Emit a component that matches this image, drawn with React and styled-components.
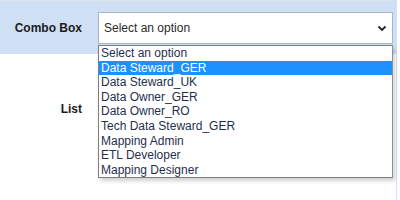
import React from 'react'
import styled, { createGlobalStyle } from 'styled-components'

const GlobalStyle = createGlobalStyle`
  body {
    margin: 0;
    background: #ffffff;
    font-family: "Liberation Sans", Arial, sans-serif;
  }
`

const options = [
  'Select an option',
  'Data Steward_GER',
  'Data Steward_UK',
  'Data Owner_GER',
  'Data Owner_RO',
  'Tech Data Steward_GER',
  'Mapping Admin',
  'ETL Developer',
  'Mapping Designer',
]

const Page = styled.div`
  position: relative;
  width: 396px;
  height: 200px;
  border-right: 1px solid #d3e2f4;
`

const Row = styled.div`
  display: flex;
  align-items: center;
  height: ${props => props.height}px;
  background: ${props => (props.shaded ? '#cfe0f5' : 'transparent')};
  border-top: ${props => (props.shaded ? '1px solid #dde3ea' : 'none')};
  box-sizing: border-box;
`

const Label = styled.div`
  width: 82px;
  padding-right: 16px;
  text-align: right;
  font-size: 12px;
  font-weight: bold;
  color: #1c1c1c;
  flex-shrink: 0;
`

const SelectBox = styled.div`
  display: flex;
  align-items: center;
  justify-content: space-between;
  width: 295px;
  height: 32px;
  box-sizing: border-box;
  padding: 0 5px 0 5px;
  background: #ffffff;
  border: 1px solid #a9b6c6;
  font-size: 12px;
  color: #2a2a2a;
`

const Chevron = styled.svg`
  width: 10px;
  height: 10px;
`

const Dropdown = styled.ul`
  position: absolute;
  top: 45px;
  left: 98px;
  width: 295px;
  box-sizing: border-box;
  margin: 0;
  padding: 0;
  list-style: none;
  background: #ffffff;
  border: 1px solid #7d7d7d;
  border-right-color: #8a8f98;
  box-shadow: 2px 3px 4px rgba(0, 0, 0, 0.18);
`

const Option = styled.li`
  height: 14.6px;
  line-height: 14.6px;
  padding-left: 2px;
  font-size: 12px;
  color: ${props => (props.active ? '#ffffff' : '#1f2f4d')};
  background: ${props => (props.active ? '#1e90ff' : 'transparent')};
  white-space: nowrap;
`

const App = () => {
  return (
    <>
      <GlobalStyle />
      <Page>
        <Row shaded height={54}>
          <Label>Combo Box</Label>
          <SelectBox>
            <span>Select an option</span>
            <Chevron viewBox="0 0 10 10">
              <polyline points="1.5,3.5 5,7 8.5,3.5" fill="none" stroke="#222" strokeWidth="1.8" />
            </Chevron>
          </SelectBox>
        </Row>
        <Row height={110}>
          <Label>List</Label>
        </Row>
        <Dropdown>
          {options.map((o, i) => (
            <Option key={o} active={i === 1}>{o}</Option>
          ))}
        </Dropdown>
      </Page>
    </>
  )
}

export default App
